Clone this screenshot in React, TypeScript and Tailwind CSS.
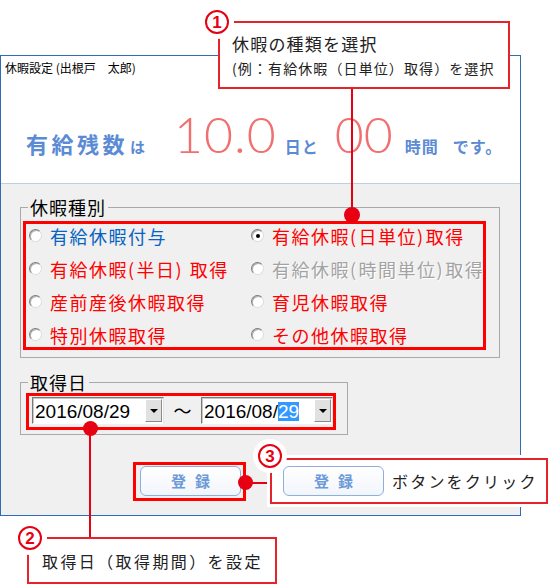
import type { ReactNode } from "react";

function Radio({ checked }: { checked?: boolean }) {
  return (
    <span className="w-[13px] h-[13px] shrink-0 rounded-full bg-white border border-t-[#7d7d7d] border-l-[#7d7d7d] border-r-[#dcdcdc] border-b-[#dcdcdc] shadow-[inset_1px_1px_0_#b0b0b0] flex items-center justify-center">
      {checked && <span className="w-[4px] h-[4px] rounded-full bg-black" />}
    </span>
  );
}

// parens get a little air after them, like the old bitmap font
function Label({ text }: { text: string }) {
  const parts = text.split(/([()])/);
  return (
    <>
      {parts.map((p, i) =>
        p === "(" || p === ")" ? (
          <span key={i} className="mr-[1px]">
            {p}
          </span>
        ) : (
          <span key={i}>{p}</span>
        )
      )}
    </>
  );
}

type RadioItem = { text: string; color: string; checked?: boolean };

const items: RadioItem[] = [
  { text: "有給休暇付与", color: "text-[#0563c1]" },
  { text: "有給休暇(日単位)取得", color: "text-[#ff0000]", checked: true },
  { text: "有給休暇(半日) 取得", color: "text-[#ff0000]" },
  { text: "有給休暇(時間単位)取得", color: "text-[#a3a3a3] [text-shadow:1px_1px_0_#ffffff]" },
  { text: "産前産後休暇取得", color: "text-[#ff0000]" },
  { text: "育児休暇取得", color: "text-[#ff0000]" },
  { text: "特別休暇取得", color: "text-[#ff0000]" },
  { text: "その他休暇取得", color: "text-[#ff0000]" },
];

function DateBox({ children }: { children: ReactNode }) {
  return (
    <div className="flex w-[132px] h-[27px] bg-white border border-t-[#7a7a7a] border-l-[#7a7a7a] border-r-[#e3e3e3] border-b-[#ffffff] shadow-[inset_1px_1px_0_#c8c8c8]">
      <span className="flex-1 pl-[2px] pt-[1px] flex items-center text-[19px] leading-none text-black font-['Liberation_Sans',sans-serif]">
        {children}
      </span>
      <span className="w-[17px] my-[1px] mr-[1px] bg-[#e1e1e1] border border-t-white border-l-white border-r-[#8a8a8a] border-b-[#8a8a8a] flex items-center justify-center">
        <span className="w-0 h-0 border-l-[4px] border-r-[4px] border-t-[4px] border-l-transparent border-r-transparent border-t-black" />
      </span>
    </div>
  );
}

function RegButton() {
  return (
    <div className="w-[101px] h-[30px] rounded-[6px] border border-[#8eaede] bg-gradient-to-b from-white to-[#f1f5fb] flex items-center justify-center text-[15px] font-bold tracking-[9px] pl-[9px] text-[#6d9ad8]">
      登録
    </div>
  );
}

function Num({ n, pos }: { n: string; pos: string }) {
  return (
    <div
      className={`absolute w-[24px] h-[24px] rounded-full border-2 border-[#e60012] bg-white ring-[5px] ring-white flex items-center justify-center text-[#e60012] font-bold text-[17px] leading-none font-['Liberation_Sans',sans-serif] ${pos}`}
    >
      {n}
    </div>
  );
}

export default function App() {
  return (
    <div className="relative w-[550px] h-[587px] bg-white overflow-hidden pt-[55px] font-['Noto_Sans_CJK_JP','Noto_Sans',sans-serif] text-[#222222]">
      {/* window */}
      <div className="w-[521px] h-[461px] border border-[#2f6cb5] flex flex-col">
        <div className="h-[128px] border-b border-[#bfd0d9] bg-white">
          <div className="pl-[4px] pt-[4px] text-[12px] leading-[16px] text-black">休暇設定 (出根戸　太郎)</div>
          <div className="flex items-baseline whitespace-nowrap pl-[25px] mt-[33px] leading-none text-[#5b8bd4] font-bold">
            <span className="text-[22px] tracking-[3.5px]">有給残数</span>
            <span className="ml-[2px] text-[15px]">は</span>
            <span className="ml-[29px] text-[50px] font-light tracking-[1px] text-[#f07070] font-['Lato','Liberation_Sans',sans-serif]">
              10.0
            </span>
            <span className="ml-[8px] text-[16px] tracking-[1px]">日と</span>
            <span className="ml-[16px] text-[50px] font-light text-[#f07070] font-['Lato','Liberation_Sans',sans-serif]">
              00
            </span>
            <span className="ml-[12px] text-[16px] tracking-[1px]">時間</span>
            <span className="ml-[14px] text-[16px] tracking-[1px]">です。</span>
          </div>
        </div>

        <div className="flex-1 bg-[#f0f0f0] pt-[12px] pl-[19px] text-black">
          <fieldset className="w-[480px] border border-[#a9a9a9] pb-[6px]">
            <legend className="ml-[7px] px-[2px] text-[18px] leading-[22px] tracking-[1px]">休暇種別</legend>
            <div className="grid grid-cols-[222px_1fr] pt-[1px]">
              {items.map((it) => (
                <div key={it.text} className="h-[33px] flex items-center pl-[8px] gap-[8px]">
                  <Radio checked={it.checked} />
                  <span className={`text-[18px] leading-none tracking-[1.5px] whitespace-nowrap ${it.color}`}>
                    <Label text={it.text} />
                  </span>
                </div>
              ))}
            </div>
          </fieldset>

          <fieldset className="mt-[13px] w-[328px] border border-[#a9a9a9]">
            <legend className="ml-[7px] px-[2px] text-[18px] leading-[22px] tracking-[1px]">取得日</legend>
            <div className="flex items-center pt-[4px] pb-[10px] pl-[11px]">
              <DateBox>2016/08/29</DateBox>
              <span className="w-[37px] text-center text-[18px]">～</span>
              <DateBox>
                2016/08/<span className="bg-[#3399ff] text-white">29</span>
              </DateBox>
            </div>
          </fieldset>

          <div className="mt-[31px] ml-[120px]">
            <RegButton />
          </div>
        </div>
      </div>

      {/* highlight boxes */}
      <div className="absolute left-[23px] top-[221px] w-[463px] h-[129px] border-[3px] border-[#ff0000]" />
      <div className="absolute left-[26px] top-[393px] w-[310px] h-[37px] border-[3px] border-[#ff0000]" />
      <div className="absolute left-[133px] top-[462px] w-[113px] h-[39px] border-[3px] border-[#ff0000]" />

      {/* leader lines and dots */}
      <div className="absolute left-[351px] top-[88px] w-[2px] h-[128px] bg-[#e60012]" />
      <div className="absolute left-[344px] top-[207px] w-[16px] h-[16px] rounded-full bg-[#e60012]" />
      <div className="absolute left-[89px] top-[428px] w-[2px] h-[110px] bg-[#e60012]" />
      <div className="absolute left-[83px] top-[421px] w-[15px] h-[15px] rounded-full bg-[#e60012]" />
      <div className="absolute left-[245px] top-[482px] w-[26px] h-[2px] bg-[#e60012]" />
      <div className="absolute left-[238px] top-[475px] w-[15px] h-[15px] rounded-full bg-[#e60012]" />

      {/* callout 1 */}
      <div className="absolute left-[218px] top-[21px] w-[292px] h-[68px] border-2 border-[#e3242b] bg-white pl-[12px] pt-[10px] whitespace-nowrap">
        <div className="text-[17px] leading-[22px] tracking-[1.2px]">休暇の種類を選択</div>
        <div className="mt-[3px] text-[14px] leading-[20px] tracking-[1.1px]">(例：有給休暇（日単位）取得）を選択</div>
      </div>
      <Num n="1" pos="left-[205px] top-[10px]" />

      {/* callout 2 */}
      <div className="absolute left-[27px] top-[537px] w-[250px] h-[47px] border-2 border-[#e3242b] flex items-center pl-[13px] text-[16px] tracking-[2.4px] whitespace-nowrap">
        取得日（取得期間）を設定
      </div>
      <Num n="2" pos="left-[18px] top-[526px]" />

      {/* callout 3 */}
      <div className="absolute left-[270px] top-[458px] w-[278px] h-[46px] border-2 border-[#e3242b] bg-white ring-[3px] ring-white flex items-center pl-[11px]">
        <RegButton />
        <span className="ml-[8px] text-[16px] tracking-[2.2px] whitespace-nowrap">ボタンをクリック</span>
      </div>
      <Num n="3" pos="left-[258px] top-[444px]" />
    </div>
  );
}
